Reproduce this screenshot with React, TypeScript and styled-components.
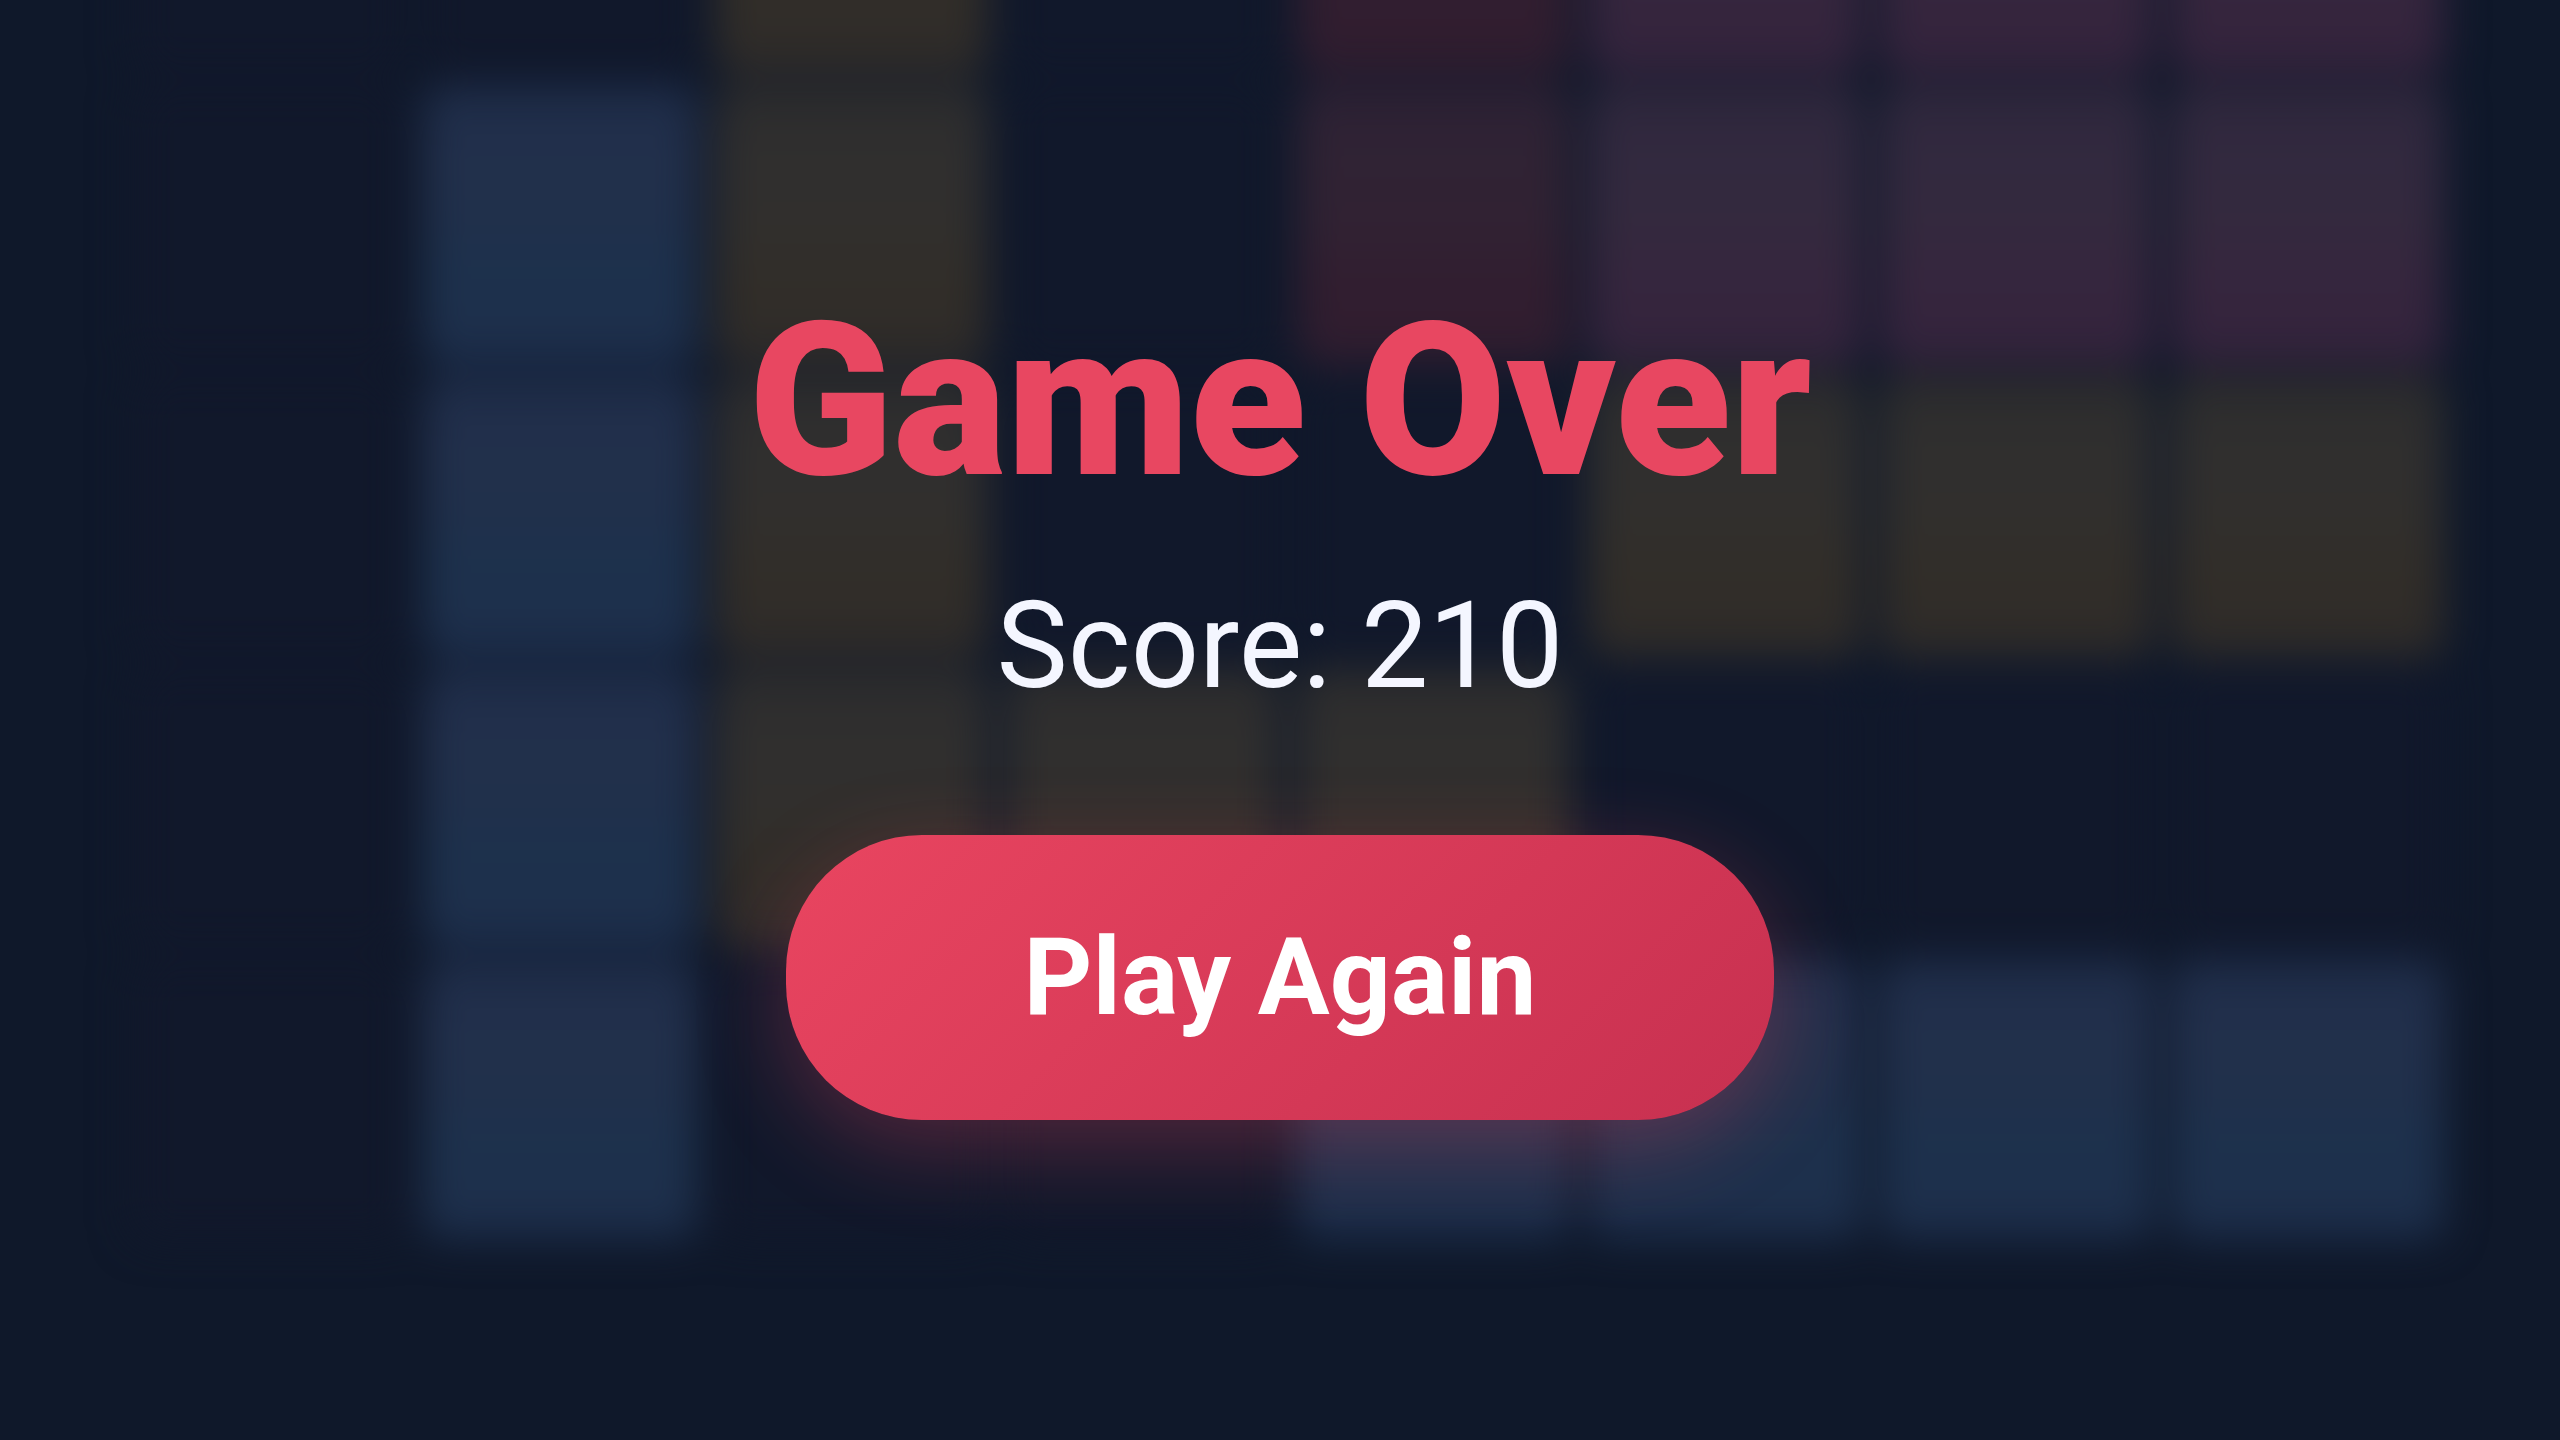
import React from "react";
import styled, { createGlobalStyle } from "styled-components";

const GlobalStyle = createGlobalStyle`
  * { box-sizing: border-box; }
  body {
    margin: 0;
    background: #0f182a;
    font-family: Roboto, "Noto Sans", sans-serif;
  }
`;

type Tone = "empty" | "blue" | "yellow" | "red" | "purple";

const tones: Record<Tone, string> = {
  empty: "#11182b",
  blue: "linear-gradient(#1e2c48 0%, #22304c 25%, #20304b 50%, #1d314d 65%, #1e304c 85%, #1b2c49 100%)",
  yellow: "linear-gradient(#2c2c2d 0%, #302f2f 25%, #312f2d 50%, #322e29 70%, #2e2b29 100%)",
  red: "linear-gradient(#2c2134 0%, #302334 25%, #312233 50%, #321e30 70%, #2f1d2f 100%)",
  purple: "linear-gradient(#2e273c 0%, #32293f 25%, #34293e 50%, #36263e 70%, #33233c 100%)",
};

const legend: Record<string, Tone> = {
  ".": "empty",
  b: "blue",
  y: "yellow",
  r: "red",
  p: "purple",
};

const rows = ["..y.rppp", ".by.rppp", ".by..yyy", ".byyy...", ".b..bbbb"];

const Stage = styled.main`
  display: grid;
  grid-template: 100vh / minmax(0, 1fr);
  overflow: hidden;
`;

const Board = styled.div`
  grid-area: 1 / 1;
  align-self: end;
  display: grid;
  grid-template-columns: repeat(8, 1fr);
  gap: 10px 18px;
  padding: 0 116px 200px 132px;
  filter: blur(20px);
`;

const Cell = styled.div<{ $tone: Tone }>`
  aspect-ratio: 273 / 281;
  border-radius: 20px;
  background: ${({ $tone }) => tones[$tone]};
`;

const Overlay = styled.section`
  grid-area: 1 / 1;
  z-index: 1;
  display: flex;
  flex-direction: column;
  align-items: center;
  justify-content: center;
  padding-bottom: 24px;
`;

const Title = styled.h1`
  margin: 0 0 80px;
  color: #e84761;
  font-size: 213px;
  font-weight: 900;
  line-height: 210px;
`;

const Score = styled.p`
  margin: 0 0 129px;
  color: #f4f6ff;
  font-size: 120px;
  line-height: 120px;
`;

const PlayButton = styled.button`
  padding: 90px 238px;
  border: 0;
  border-radius: 136px;
  background: linear-gradient(135deg, #e94560, #c73050);
  box-shadow: 0 26px 90px rgba(233, 69, 96, 0.3);
  color: #fff;
  font-family: inherit;
  font-size: 107px;
  font-weight: 700;
  line-height: 105px;
  cursor: pointer;
`;

export default function App() {
  return (
    <>
      <GlobalStyle />
      <Stage>
        <Board aria-hidden="true">
          {rows.flatMap((row, y) =>
            row.split("").map((key, x) => <Cell key={`${x}-${y}`} $tone={legend[key]} />)
          )}
        </Board>
        <Overlay>
          <Title>Game Over</Title>
          <Score>Score: 210</Score>
          <PlayButton type="button">Play Again</PlayButton>
        </Overlay>
      </Stage>
    </>
  );
}
